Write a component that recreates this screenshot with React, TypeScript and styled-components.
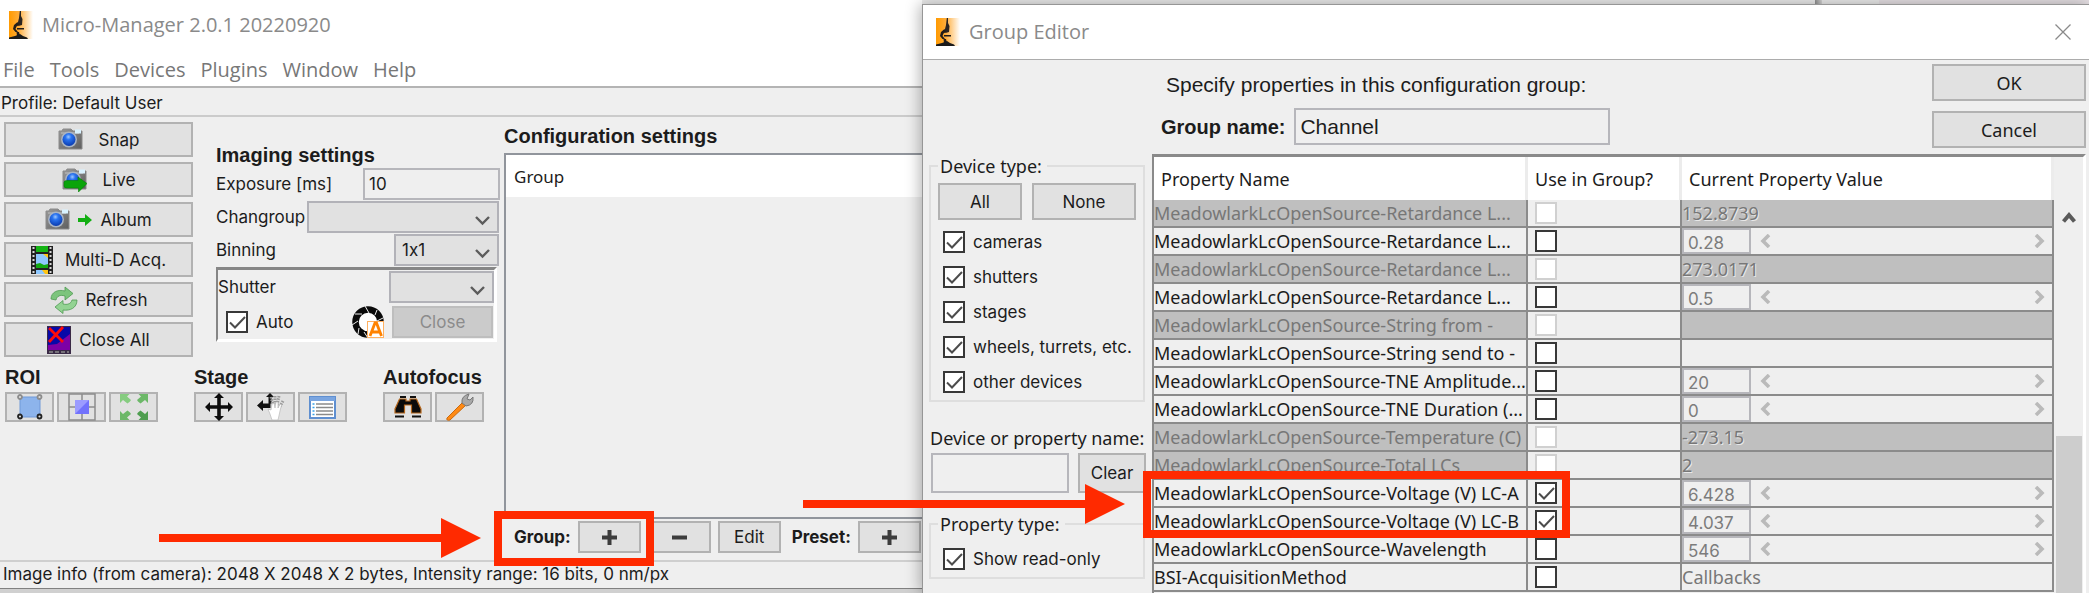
import React from "react";
import styled, { createGlobalStyle, css } from "styled-components";

const ui = `Inter, "Liberation Sans", sans-serif`;
const sys = `"Open Sans", "Noto Sans", sans-serif`;
const tahoma = `"Noto Sans", "DejaVu Sans", sans-serif`;
const arial = `"Liberation Sans", Arial, sans-serif`;
const red = "#ff2a00";

const Global = createGlobalStyle`
  *, *::before, *::after { box-sizing: border-box; }
  body { margin: 0; background: #d0d0d0; color: #1c1c1c; font: 17px/24px ${ui}; }
  button, input, select { font: inherit; color: inherit; margin: 0; padding: 0; border-radius: 0; }
  select { font-feature-settings: "calt" 0; }
  svg { display: block; flex: none; }
  h2, p { margin: 0; }
`;

const Desktop = styled.div`
  position: relative;
  display: grid;
  grid-template-columns: minmax(0, 922fr) minmax(0, 1167fr);
  height: 100vh;
  min-height: 590px;
  overflow: hidden;
`;

/* ---------- shared controls ---------- */

const Button = styled.button<{ $w?: number; $h?: number; $font?: string; $gap?: number }>`
  display: flex;
  align-items: center;
  justify-content: center;
  gap: ${(p) => p.$gap ?? 8}px;
  width: ${(p) => (p.$w ? `${p.$w}px` : "auto")};
  height: ${(p) => p.$h ?? 35}px;
  border: 2px solid #b2b2b2;
  background: #e1e1e1;
  font-family: ${(p) => p.$font ?? ui};
  font-size: ${(p) => (p.$font ? 18 : 17)}px;
  white-space: nowrap;
  &:disabled { background: #cbcbcb; border-color: #bebebe; color: #8b8b8b; }
`;

const Field = styled.input<{ $w?: number; $h: number }>`
  width: ${(p) => (p.$w ? `${p.$w}px` : "auto")};
  height: ${(p) => p.$h}px;
  padding: 0 4px;
  border: 2px solid #b6b6bb;
  background: #efefef;
  outline: none;
`;

const SelectBox = styled.span<{ $w: number }>`
  position: relative;
  width: ${(p) => p.$w}px;
  height: 32px;
  select {
    appearance: none;
    width: 100%;
    height: 100%;
    padding: 0 6px;
    border: 2px solid #b2b2b8;
    background: #e1e1e1;
  }
  svg { position: absolute; right: 8px; top: 14px; pointer-events: none; }
`;

function Select({ id, w, value, label }: { id?: string; w: number; value: string; label?: string }) {
  return (
    <SelectBox $w={w}>
      <select id={id} aria-label={label} defaultValue={value}>
        <option value={value}>{value}</option>
      </select>
      <svg width="17" height="11" viewBox="0 0 17 11"><path d="M2 2l6.500 6.500L15 2" fill="none" stroke="#5c5c5c" strokeWidth="2.400" /></svg>
    </SelectBox>
  );
}

const TickBox = styled.span`
  position: relative;
  flex: none;
  width: 22px;
  height: 22px;
  input {
    display: block;
    appearance: none;
    width: 22px;
    height: 22px;
    border: 2px solid #383838;
    background: #fff;
  }
  input:disabled { border-color: #d0d0d0; }
  svg { position: absolute; inset: 0; pointer-events: none; }
`;

function Tick({ on, ...rest }: { on?: boolean } & React.InputHTMLAttributes<HTMLInputElement>) {
  return (
    <TickBox>
      <input type="checkbox" defaultChecked={on} {...rest} />
      {on && <svg width="22" height="22" viewBox="0 0 22 22"><path d="M4 11.500l5 5L19 6" fill="none" stroke="#4c4c4c" strokeWidth="2" /></svg>}
    </TickBox>
  );
}

const CheckLabel = styled.label<{ $inset?: boolean }>`
  display: flex;
  align-items: center;
  gap: 8px;
  height: 35px;
  white-space: nowrap;
  ${(p) => p.$inset && css`height: 32px; padding-left: 8px; margin-right: auto;`}
`;

/* ---------- icons ---------- */

function Microscope({ id }: { id: string }) {
  return (
    <svg width="24" height="28" viewBox="0 0 24 28">
      <defs>
        <linearGradient id={id} x1="0" x2="1" y1="0" y2="0">
          <stop offset="0" stopColor="#ff9a00" /><stop offset=".4" stopColor="#ffac38" /><stop offset="1" stopColor="#fff" />
        </linearGradient>
      </defs>
      <rect width="24" height="28" fill={`url(#${id})`} />
      <path d="M10.800 0h1.200v5l1.500 3-.5 6-3.500 1-1-2 1.500-6z" fill="#2b2420" />
      <path d="M8.500 11L5 14l-1 4 2.500 3h2.500l-2.500-3 1-2.500 2.500-1.500zM8 17h7v1.500H8zM7.500 21l2.500 0 1 4h-3z" fill="#221d1a" />
      <path d="M0 28v-1.500l6-1.500 5-2 3 2 4 1.500 1 1.500z" fill="#1a1a1a" />
    </svg>
  );
}

function Camera({ id, live }: { id: string; live?: boolean }) {
  return (
    <svg width="25" height="25" viewBox="0 0 25 25">
      <defs>
        <linearGradient id={`${id}b`} x1="0" x2="1" y1="0" y2="1"><stop offset="0" stopColor="#9a9a9a" /><stop offset="1" stopColor="#5e5e5e" /></linearGradient>
        <radialGradient id={`${id}l`} cx=".45" cy=".3" r=".75"><stop offset="0" stopColor="#9cc8ff" /><stop offset=".3" stopColor="#2a74f0" /><stop offset="1" stopColor="#0634a8" /></radialGradient>
      </defs>
      <path d="M1 4h3l1-2h8l2 2h9v18H1z" fill={`url(#${id}b)`} stroke="#8a8a8a" />
      <path d="M3 5h18v2H3z" fill="#b4b4b4" opacity=".7" />
      <rect x="17" y="2.500" width="6" height="4" fill="#d8f2ff" />
      <circle cx="11" cy="12.500" r="8" fill="#a9b4c4" />
      <circle cx="11" cy="12.500" r="6.500" fill={`url(#${id}l)`} />
      {live && <path d="M2 15.500q0-2 3-2h11V10l9 6.500L16.500 25v-4H5q-3 0-3-2z" fill="#0aa40a" stroke="#068006" strokeWidth=".6" />}
    </svg>
  );
}

const SmallArrow = () => (
  <svg width="14" height="12" viewBox="0 0 14 12"><path d="M0 4h7V0l7 6-7 6V8H0z" fill="#12ae12" /></svg>
);

const Film = () => (
  <svg width="22" height="28" viewBox="0 0 22 28">
    <rect width="22" height="28" fill="#222" />
    <rect x="5" width="12" height="6" fill="#14b414" /><rect x="5" y="8" width="12" height="14" fill="#8ec8ff" />
    <path d="M12 8h5v4z" fill="#ffc414" /><path d="M5 18l4-1 4 2 4-1v4H5z" fill="#12a812" />
    <rect x="5" y="24" width="12" height="4" fill="#8ec8ff" /><path d="M11 24h6v4h-3z" fill="#ffc414" />
    <path d="M2.500 1v27M19.500 1v27" stroke="#d8d8d8" strokeWidth="2" strokeDasharray="2 2" />
  </svg>
);

const Refresh = () => (
  <svg width="28" height="28" viewBox="0 0 28 28">
    <g stroke="#4e9a52" strokeWidth=".8">
      <path d="M1 13C1 6 8 3 15 5V1l8 6.500L15 14v-4c-5-1.500-8 0-9 4z" fill="#7cc47c" />
      <path d="M27 14c0 8-7 11-14 10v3.500L5 21l8-6.500V18c4 1 8 0 9-4z" fill="#93d393" />
    </g>
  </svg>
);

const CloseAllIcon = () => (
  <svg width="24" height="28" viewBox="0 0 24 28">
    <rect width="24" height="28" fill="#3a2a46" /><path d="M1 1h22v11L1 22z" fill="#0808a8" /><path d="M23 8v16H1v-5l9-1z" fill="#7d00a6" />
    <path d="M2 26h20" stroke="#8a8a8a" strokeWidth="1.500" strokeDasharray="4 2" />
    <path d="M2 2l14 14M16 1L2 16" stroke="#ff0a0a" strokeWidth="2.800" />
  </svg>
);

const Aperture = styled((p: React.SVGProps<SVGSVGElement>) => (
  <svg width="32" height="32" viewBox="0 0 32 32" {...p}>
    <circle cx="16" cy="16" r="12.500" fill="#fff" stroke="#0a0a0a" strokeWidth="6.500" />
    <path d="M13 0l4 7M25 4l-2 5M31 12l-6 3M3 8l7 0M0 19l6-4M6 28l1-6M16 32l-4-6" stroke="#efefef" strokeWidth="1" />
    <rect x="15.500" y="15.500" width="16" height="16" fill="#fff" stroke="#ffb060" />
    <path d="M18 30l5-13h1.500l5 13M20 26h8" fill="none" stroke="#ff8200" strokeWidth="2.800" />
  </svg>
))`
  margin-right: 8px;
`;

const RoiSquare = () => (
  <svg width="26" height="26" viewBox="0 0 26 26">
    <rect x="3" y="3" width="20" height="20" fill="#8db4ec" stroke="#7099d8" />
    <g fill="#ddd" strokeWidth="1.800"><g stroke="#8c8c8c"><circle cx="3" cy="3" r="2" /><circle cx="22.500" cy="3" r="2" /></g><g stroke="#222"><circle cx="3" cy="22.500" r="2" /><circle cx="22.500" cy="22.500" r="2" /></g></g>
  </svg>
);

const RoiCentre = () => (
  <svg width="28" height="28" viewBox="0 0 28 28">
    <path d="M1 1h26v26H1zM14 1v26M1 14h26" fill="none" stroke="#8c8c8c" strokeWidth="1.500" />
    <rect x="7" y="7" width="14" height="14" fill="#7272fc" /><path d="M7 7h14L7 21z" fill="#9c9cff" />
  </svg>
);

const RoiFull = () => (
  <svg width="30" height="28" viewBox="0 0 30 28">
    {[["#86cc80", ""], ["#6cb868", "matrix(-1 0 0 1 30 0)"], ["#6cb868", "matrix(1 0 0 -1 0 28)"], ["#4f9e50", "matrix(-1 0 0 -1 30 28)"]].map(([c, t]) => (
      <path key={t} transform={t} d="M1 1h9.500L8 3.500l4 3.500-1 1.500-2.500 2L4 7l-3 3z" fill={c} />
    ))}
  </svg>
);

const Move = () => (
  <svg width="28" height="28" viewBox="0 0 28 28">
    <path d="M14 0l5 5h-3.200v7.200H23V9l5 5-5 5v-3.200h-7.200V23H19l-5 5-5-5h3.200v-7.200H5V19l-5-5 5-5v3.200h7.200V5H9z" fill="#0c0c0c" />
  </svg>
);

const HandMove = () => (
  <svg width="28" height="28" viewBox="0 0 28 28">
    <path d="M13 0l4 4h-2.500v6.500h-1V15H6v3l-6-5.500L6 7v3.500h5.500V4H9z" fill="#111" />
    <path d="M14 4l2 8M18 3v8M22 3l-2 9M26 8l-4 7" stroke="#999" strokeWidth="3" strokeDasharray="1.500 1" />
    <path d="M11 16l3 1 1-6 2-1 1 5 1-6h2l0 6 2-4 1.500 1-1.500 6-2 9h-6l-2-6z" fill="#fff" stroke="#b0b0b0" strokeWidth=".6" />
  </svg>
);

const ListIcon = () => (
  <svg width="27" height="23" viewBox="0 0 27 23">
    <rect x="1" y="1" width="25" height="21" fill="#fff" stroke="#5f8fd0" strokeWidth="2" /><path d="M1 1h25v4H1z" fill="#7aa5e0" />
    <path d="M7 8h17M7 11.500h17M7 15h17M7 18.500h17" stroke="#8a8a8a" strokeWidth="1.400" /><path d="M3.500 8h2M3.500 11.500h2M3.500 15h2M3.500 18.500h2" stroke="#38a0e8" strokeWidth="1.400" />
  </svg>
);

const Binoculars = () => (
  <svg width="28" height="22" viewBox="0 0 28 22">
    <path d="M6 1h6M16 1h6M1 20.500h9M18 20.500h9" stroke="#111" strokeWidth="2.200" />
    <path d="M5.500 3H12v2h4V3h6.500L27 13v4h-9.500V9h-7v8H1v-4z" fill="#0b0b0b" stroke="#b4661c" strokeWidth="1.200" />
  </svg>
);

const Wrench = () => (
  <svg width="30" height="28" viewBox="0 0 30 28">
    <path d="M2 25L18 9l3 3L5 27q-4 1-3-2z" fill="#ff8a14" stroke="#c86a10" />
    <path d="M17 10q-1-7 7-9l-2 5 3 1 3-3q1 8-7 9z" fill="#a9a9a9" stroke="#777" />
  </svg>
);

const Sign = ({ plus }: { plus?: boolean }) => (
  <svg width="15" height="15" viewBox="0 0 15 15"><path d={plus ? "M0 7.500h15M7.500 0v15" : "M0 7.500h15"} stroke="#3c3c3c" strokeWidth="4" /></svg>
);

/* ---------- main window ---------- */

const MainWindow = styled.section`
  display: flex;
  flex-direction: column;
  min-width: 0;
  margin-bottom: 4px;
  border-bottom: 1px solid #808080;
  background: #efefef;
`;

const TitleBar = styled.header<{ $dialog?: boolean }>`
  display: flex;
  align-items: center;
  gap: 9px;
  height: 50px;
  padding-left: 9px;
  background: #fff;
  color: #8a8a8a;
  font: 20px/28px ${sys};
  ${(p) => p.$dialog && css`height: 55px; padding: 0 18px 0 13px; border-bottom: 1px solid #acacac;`}
  button { margin-left: auto; border: 0; background: none; }
`;

const MenuBar = styled.nav`
  display: flex;
  gap: 15px;
  height: 38px;
  padding: 3px 0 0 3px;
  border-bottom: 2px solid #b4b4b4;
  background: #fff;
  button { border: 0; background: none; color: #777; font: 20px/28px ${sys}; }
`;

const Profile = styled.p`
  height: 29px;
  padding: 3px 1px;
  border-bottom: 2px solid #cbcbcb;
`;

const MainBody = styled.div`
  display: grid;
  grid-template-columns: 504px minmax(0, 1fr);
  flex: 1;
  min-height: 0;
`;

const Controls = styled.div`padding: 5px 4px 0 4px;`;

const TopControls = styled.div`
  display: grid;
  grid-template-columns: 189px 284px;
  gap: 23px;
`;

const Actions = styled.div`
  display: flex;
  flex-direction: column;
  gap: 5px;
`;

const Heading = styled.h2`
  font: bold 20px/24px ${arial};
  white-space: nowrap;
`;

const Imaging = styled.div`
  display: flex;
  flex-direction: column;
  gap: 1px;
  padding-top: 21px;
`;

const SettingRow = styled.div<{ $right?: number }>`
  display: flex;
  align-items: center;
  justify-content: space-between;
  height: 32px;
  padding-right: ${(p) => p.$right ?? 1}px;
  white-space: nowrap;
`;

const ShutterBox = styled.div`
  display: flex;
  flex-direction: column;
  gap: 3px;
  width: 281px;
  padding: 1px 0 1px 0;
  border: solid;
  border-width: 3px 3px 3px 2px;
  border-color: #868686 #fff #fff #868686;
`;

const ToolGroups = styled.div`
  display: grid;
  grid-template-columns: 189px 189px 1fr;
  padding: 8px 0 0 1px;
`;

const Tools = styled.div`
  display: flex;
  gap: 3px;
  padding-top: 3px;
`;

const Config = styled.div`
  display: flex;
  flex-direction: column;
  min-width: 0;
  padding: 7px 0;
`;

const PresetList = styled.div`
  flex: 1;
  margin: 5px 0 2px;
  border: solid #91959c;
  border-width: 2px 0 2px 2px;
`;

const PresetHeader = styled.div`
  height: 42px;
  padding: 10px 8px 8px;
  background: #fff;
  font: 17px/24px ${tahoma};
`;

const PresetBar = styled.div`
  display: flex;
  align-items: center;
  gap: 7px;
  padding-left: 10px;
  overflow: hidden;
  b + button ~ b { margin-left: 4px; }
  button { flex: none; }
`;

const Status = styled.footer`
  height: 28px;
  border-top: 2px solid #cfcfcf;
  padding: 0 3px;
  white-space: nowrap;
`;

const actions: [string, React.ReactNode, number][] = [
  ["Snap", <Camera key="i" id="snap" />, 16],
  ["Live", <Camera key="i" id="live" live />, 16],
  ["Album", <React.Fragment key="i"><Camera id="album" /><SmallArrow /></React.Fragment>, 8],
  ["Multi-D Acq.", <Film key="i" />, 12],
  ["Refresh", <Refresh key="i" />, 8],
  ["Close All", <CloseAllIcon key="i" />, 8],
];

const toolGroups: [string, [string, React.ReactNode][]][] = [
  ["ROI", [["Set ROI", <RoiSquare key="i" />], ["Centre ROI", <RoiCentre key="i" />], ["Full frame", <RoiFull key="i" />]]],
  ["Stage", [["Move stage", <Move key="i" />], ["Drag stage", <HandMove key="i" />], ["Position list", <ListIcon key="i" />]]],
  ["Autofocus", [["Run autofocus", <Binoculars key="i" />], ["Autofocus options", <Wrench key="i" />]]],
];

function Main() {
  return (
    <MainWindow>
      <TitleBar><Microscope id="scope-main" />Micro-Manager 2.0.1 20220920</TitleBar>
      <MenuBar>{["File", "Tools", "Devices", "Plugins", "Window", "Help"].map((m) => <button key={m}>{m}</button>)}</MenuBar>
      <Profile>Profile: Default User</Profile>
      <MainBody>
        <Controls>
          <TopControls>
            <Actions>{actions.map(([label, icon, gap]) => <Button key={label} $gap={gap}>{icon}{label}</Button>)}</Actions>
            <Imaging>
              <Heading>Imaging settings</Heading>
              <SettingRow $right={0}><label htmlFor="exposure">Exposure [ms]</label><Field id="exposure" $w={137} $h={32} defaultValue="10" /></SettingRow>
              <SettingRow><label htmlFor="changroup">Changroup</label><Select id="changroup" w={192} value="" /></SettingRow>
              <SettingRow><label htmlFor="binning">Binning</label><Select id="binning" w={105} value="1x1" /></SettingRow>
              <ShutterBox>
                <SettingRow $right={0}><label htmlFor="shutter">Shutter</label><Select id="shutter" w={105} value="" /></SettingRow>
                <SettingRow>
                  <CheckLabel $inset><Tick on />Auto</CheckLabel>
                  <Aperture />
                  <Button $w={101} $h={32} disabled>Close</Button>
                </SettingRow>
              </ShutterBox>
            </Imaging>
          </TopControls>
          <ToolGroups>
            {toolGroups.map(([name, tools]) => (
              <div key={name}>
                <Heading>{name}</Heading>
                <Tools>{tools.map(([label, icon]) => <Button key={label} $w={49} $h={30} aria-label={label}>{icon}</Button>)}</Tools>
              </div>
            ))}
          </ToolGroups>
        </Controls>
        <Config>
          <Heading>Configuration settings</Heading>
          <PresetList><PresetHeader>Group</PresetHeader></PresetList>
          <PresetBar>
            <b>Group:</b>
            <Button $w={63} $h={32} aria-label="Add group"><Sign plus /></Button>
            <Button $w={63} $h={32} aria-label="Remove group"><Sign /></Button>
            <Button $w={63} $h={32}>Edit</Button>
            <b>Preset:</b>
            <Button $w={63} $h={32} aria-label="Add preset"><Sign plus /></Button>
          </PresetBar>
        </Config>
      </MainBody>
      <Status>Image info (from camera): 2048 X 2048 X 2 bytes, Intensity range: 16 bits, 0 nm/px</Status>
    </MainWindow>
  );
}

/* ---------- group editor dialog ---------- */

const DialogSlot = styled.div`
  display: flex;
  min-width: 0;
  min-height: 0;
  padding-top: 4px;
  background: linear-gradient(to right, #ebebeb 76.5%, #8c8c8c 76.5%, #d4d4d4 77.1%, #ebebeb 77.1%, #ebebeb 82%, #e6e0e4 82%);
`;

const Dialog = styled.section`
  position: relative;
  display: flex;
  flex-direction: column;
  flex: 1;
  min-width: 0;
  border: solid #969696;
  border-width: 1px 0 0 1px;
  background: #efefef;
  box-shadow: -2px 0 14px rgba(0, 0, 0, 0.3);
`;

const DialogBody = styled.div`
  display: grid;
  grid-template-columns: 217px minmax(0, 1fr);
  gap: 6px;
  flex: 1;
  min-height: 0;
  padding: 0 3px 0 6px;
`;

const Filters = styled.div`padding-top: 94px;`;

const FieldSet = styled.fieldset`
  width: 216px;
  margin: 0;
  padding: 5px 7px 1px;
  border: 2px solid #dedede;
  legend { padding: 0 5px 0 2px; font: 18px/24px ${tahoma}; }
  ${CheckLabel} { padding-left: 5px; }
`;

const ButtonPair = styled.div`
  display: flex;
  gap: 10px;
  margin-bottom: 4px;
`;

const NameFilter = styled.div`
  margin: 24px 0 19px;
  label { padding-left: 1px; font: 18px/24px ${tahoma}; white-space: nowrap; }
  div { display: flex; gap: 9px; padding: 2px 0 0 2px; }
`;

const Editor = styled.div`
  display: flex;
  flex-direction: column;
  min-width: 0;
  min-height: 0;
`;

const EditorHead = styled.div`
  display: flex;
  flex: none;
  justify-content: space-between;
  height: 94px;
`;

const GroupForm = styled.div`
  padding-top: 7px;
  font: 21px/36px ${arial};
  p { padding-left: 14px; }
  div { display: flex; align-items: center; gap: 9px; padding: 5px 0 0 9px; }
  label { font: bold 20px/36px ${arial}; }
`;

const DialogButtons = styled.div`
  display: flex;
  flex-direction: column;
  gap: 10px;
  padding-top: 4px;
`;

const Sheet = styled.div`
  display: flex;
  flex: 1;
  min-height: 0;
  overflow: hidden;
  border: solid;
  border-width: 3px 3px 0 2px;
  border-color: #8a8a8a #fff #fff #8a8a8a;
`;

const TableClip = styled.div`
  flex: 1;
  min-width: 0;
  overflow: hidden;
`;

const Table = styled.table`
  width: 100%;
  table-layout: fixed;
  border-collapse: separate;
  border-spacing: 0;
  font: 18px/24px ${tahoma};
  th {
    height: 43px;
    padding: 0 0 0 7px;
    border-right: 3px solid #ececec;
    background: #fff;
    font-weight: normal;
    text-align: left;
  }
  th:nth-child(1) { width: 374px; }
  th:nth-child(2) { width: 154px; }
  td {
    height: 28px;
    padding: 0;
    border: solid #8b8b8b;
    border-width: 0 2px 2px 0;
    white-space: nowrap;
    overflow: hidden;
  }
`;

const Row = styled.tr<{ $locked?: boolean }>`
  td:first-child { background: ${(p) => (p.$locked ? "#bfbfbf" : "#efefef")}; color: ${(p) => (p.$locked ? "#777" : "#1c1c1c")}; }
  td:nth-child(2) { padding-left: 7px; }
  td:last-child {
    background: ${(p) => (p.$locked ? "#bfbfbf" : "#efefef")};
    color: #777;
    text-shadow: 1px 1px 0 ${(p) => (p.$locked ? "#e8e8e8" : "transparent")};
  }
`;

const Slider = styled.div`
  display: flex;
  align-items: center;
  height: 26px;
  button { border: 0; background: none; }
  button:first-of-type { margin-left: 9px; }
  button:last-of-type { margin-left: auto; margin-right: 7px; }
`;

const ValueField = styled(Field)`
  padding-top: 3px;
  color: #7c7c7c;
  font: 17px/20px ${ui};
`;

const ScrollBar = styled.div`
  display: flex;
  flex-direction: column;
  width: 29px;
  padding: 54px 1px 0 2px;
  background: #efefef;
  svg { align-self: center; }
  &::after { content: ""; flex: 1; margin-top: 213px; background: #cdcdcd; }
`;

const Chevron = ({ flip }: { flip?: boolean }) => (
  <svg width="11" height="14" viewBox="0 0 11 14"><path transform={flip ? "matrix(-1 0 0 1 11 0)" : undefined} d="M9 1L3 7l6 6" fill="none" stroke="#bababa" strokeWidth="3.600" /></svg>
);

type Prop = { name: string; value: string; kind: "locked" | "slider" | "text"; used?: boolean };
const M = "MeadowlarkLcOpenSource-";
const props: Prop[] = [
  { name: M + "Retardance L...", value: "152.8739", kind: "locked" },
  { name: M + "Retardance L...", value: "0.28", kind: "slider" },
  { name: M + "Retardance L...", value: "273.0171", kind: "locked" },
  { name: M + "Retardance L...", value: "0.5", kind: "slider" },
  { name: M + "String from -", value: "", kind: "locked" },
  { name: M + "String send to -", value: "", kind: "text" },
  { name: M + "TNE Amplitude...", value: "20", kind: "slider" },
  { name: M + "TNE Duration (...", value: "0", kind: "slider" },
  { name: M + "Temperature (C)", value: "-273.15", kind: "locked" },
  { name: M + "Total LCs", value: "2", kind: "locked" },
  { name: M + "Voltage (V) LC-A", value: "6.428", kind: "slider", used: true },
  { name: M + "Voltage (V) LC-B", value: "4.037", kind: "slider", used: true },
  { name: M + "Wavelength", value: "546", kind: "slider" },
  { name: "BSI-AcquisitionMethod", value: "Callbacks", kind: "text" },
];

function GroupEditor() {
  return (
    <DialogSlot>
      <Dialog role="dialog" aria-label="Group Editor">
        <TitleBar $dialog>
          <Microscope id="scope-dialog" />Group Editor
          <button aria-label="Close"><svg width="16" height="16" viewBox="0 0 16 16"><path d="M.5.5l15 15M15.500.5l-15 15" stroke="#8a8a8a" strokeWidth="1.300" /></svg></button>
        </TitleBar>
        <DialogBody>
          <Filters>
            <FieldSet>
              <legend>Device type:</legend>
              <ButtonPair><Button $w={84} $h={37}>All</Button><Button $w={104} $h={37}>None</Button></ButtonPair>
              {["cameras", "shutters", "stages", "wheels, turrets, etc.", "other devices"].map((d) => <CheckLabel key={d}><Tick on />{d}</CheckLabel>)}
            </FieldSet>
            <NameFilter>
              <label htmlFor="name-filter">Device or property name:</label>
              <div><Field id="name-filter" $w={138} $h={40} /><Button $w={68} $h={40}>Clear</Button></div>
            </NameFilter>
            <FieldSet>
              <legend>Property type:</legend>
              <CheckLabel><Tick on />Show read-only</CheckLabel>
            </FieldSet>
          </Filters>
          <Editor>
            <EditorHead>
              <GroupForm>
                <p>Specify properties in this configuration group:</p>
                <div><label htmlFor="group-name">Group name:</label><Field id="group-name" $w={316} $h={37} defaultValue="Channel" /></div>
              </GroupForm>
              <DialogButtons>
                <Button $w={154} $h={37} $font={tahoma}>OK</Button>
                <Button $w={154} $h={37} $font={tahoma}>Cancel</Button>
              </DialogButtons>
            </EditorHead>
            <Sheet>
              <TableClip>
                <Table>
                  <thead><tr><th>Property Name</th><th>Use in Group?</th><th>Current Property Value</th></tr></thead>
                  <tbody>
                    {props.map((p, i) => (
                      <Row key={i} $locked={p.kind === "locked"}>
                        <td>{p.name}</td>
                        <td><Tick on={p.used} disabled={p.kind === "locked"} aria-label={`Use ${p.name}`} /></td>
                        <td>
                          {p.kind === "slider" ? (
                            <Slider>
                              <ValueField $w={69} $h={26} defaultValue={p.value} aria-label={p.name} />
                              <button aria-label="Decrease"><Chevron /></button>
                              <button aria-label="Increase"><Chevron flip /></button>
                            </Slider>
                          ) : p.value}
                        </td>
                      </Row>
                    ))}
                  </tbody>
                </Table>
              </TableClip>
              <ScrollBar>
                <svg width="14" height="12" viewBox="0 0 14 12"><path d="M1.500 10.500L7 4l5.500 6.500" fill="none" stroke="#5a5a5a" strokeWidth="4" /></svg>
              </ScrollBar>
            </Sheet>
          </Editor>
        </DialogBody>
      </Dialog>
    </DialogSlot>
  );
}

/* ---------- red call-outs laid over both windows ---------- */

const Highlight = styled.div<{ $x: number; $y: number; $w: number; $h: number }>`
  position: absolute;
  left: ${(p) => p.$x}px;
  top: ${(p) => p.$y}px;
  width: ${(p) => p.$w}px;
  height: ${(p) => p.$h}px;
  border: 8px solid ${red};
  pointer-events: none;
`;

const ArrowSvg = styled.svg<{ $x: number; $y: number }>`
  position: absolute;
  left: ${(p) => p.$x}px;
  top: ${(p) => p.$y}px;
  pointer-events: none;
`;

const Arrow = ({ x, y }: { x: number; y: number }) => (
  <ArrowSvg $x={x} $y={y} width="322" height="40" viewBox="0 0 322 40"><path d="M0 16h282V0l40 20-40 20V24H0z" fill={red} /></ArrowSvg>
);

export default function App() {
  return (
    <Desktop>
      <Global />
      <Main />
      <GroupEditor />
      <Highlight $x={494} $y={511} $w={160} $h={55} />
      <Highlight $x={1143} $y={471} $w={427} $h={67} />
      <Arrow x={159} y={518} />
      <Arrow x={803} y={484} />
    </Desktop>
  );
}
